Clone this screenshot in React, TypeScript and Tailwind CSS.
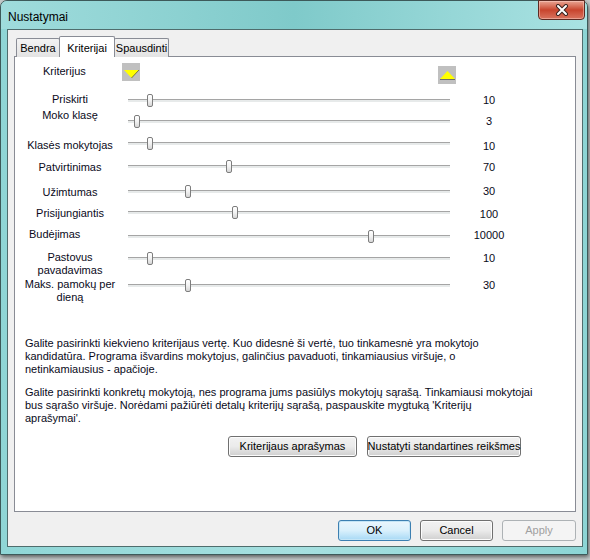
import React from 'react'

type Row = {
  label: string[]
  value: string
  thumb: number
  h: string
  labelCls: string
  valueCls: string
}

// thumb = x of the thumb centre on the page; track runs 128..450
const rows: Row[] = [
  { label: ['Priskirti'], value: '10', thumb: 150, h: 'h-[21px]', labelCls: 'mt-[1px]', valueCls: 'mt-0' },
  { label: ['Moko klasę'], value: '3', thumb: 137, h: 'h-[22px]', labelCls: '-mt-[4px]', valueCls: 'mt-0' },
  { label: ['Klasės mokytojas'], value: '10', thumb: 150, h: 'h-[23px]', labelCls: 'mt-[4px]', valueCls: 'mt-[3px]' },
  { label: ['Patvirtinimas'], value: '70', thumb: 229, h: 'h-[25px]', labelCls: 'mt-[3px]', valueCls: 'mt-[1px]' },
  { label: ['Užimtumas'], value: '30', thumb: 188, h: 'h-[21px]', labelCls: 'mt-[3px]', valueCls: 'mt-0' },
  { label: ['Prisijungiantis'], value: '100', thumb: 235, h: 'h-[24px]', labelCls: 'mt-[3px]', valueCls: 'mt-[2px]' },
  { label: ['Budėjimas'], value: '10000', thumb: 371, h: 'h-[22px]', labelCls: 'mt-0 text-left pl-[9px]', valueCls: '-mt-[1px]' },
  { label: ['Pastovus', 'pavadavimas'], value: '10', thumb: 150, h: 'h-[27px]', labelCls: 'mt-[1px]', valueCls: 'mt-0' },
  { label: ['Maks. pamokų per', 'dieną'], value: '30', thumb: 188, h: 'h-[16px]', labelCls: 'mt-[1px] leading-[12px]', valueCls: 'mt-0' },
]

function Slider({ x }: { x: number }) {
  return (
    <div className="relative w-[334px] h-[16px] shrink-0">
      <div className="absolute left-[6px] right-[6px] top-[7px] h-px bg-[#a5a5a5]" />
      <div className="absolute left-[6px] right-[6px] top-[8px] h-[2px] bg-[#e7eaea]" />
      <div
        className="absolute top-[2px] w-[6px] h-[13px] rounded-[2px] border border-[#7d7d7d] bg-gradient-to-b from-white via-[#f2f2f2] to-[#d6d6d6]"
        style={{ left: x - 122 - 3 }}
      />
    </div>
  )
}

function ArrowBox({ up }: { up?: boolean }) {
  return (
    <div className="w-[18px] h-[18px] bg-[#c0c0c0] shrink-0">
      <svg width="18" height="18" viewBox="0 0 18 18">
        {up ? (
          <>
            <polygon points="9.5,5 17,13 2,13" fill="#ffff00" />
            <line x1="2" y1="13.5" x2="17" y2="13.5" stroke="#6b6b6b" strokeWidth="1" />
          </>
        ) : (
          <>
            <polygon points="2,7 17,7 9.5,15" fill="#ffff00" />
            <line x1="17" y1="7" x2="9.5" y2="15" stroke="#7a7a3a" strokeWidth="1" />
          </>
        )}
      </svg>
    </div>
  )
}

function WinButton({ children, kind = 'normal', className = '' }: { children: React.ReactNode; kind?: 'normal' | 'default' | 'disabled'; className?: string }) {
  const look =
    kind === 'default'
      ? 'border-[#3c7fb1] bg-gradient-to-b from-[#eaf6fd] via-[#d9f0fc] to-[#a7d9f5] text-black shadow-[inset_0_0_0_1px_#c4e5f6]'
      : kind === 'disabled'
        ? 'border-[#adb2b5] bg-[#f4f4f4] text-[#a0a0a0]'
        : 'border-[#707070] bg-gradient-to-b from-[#f2f2f2] via-[#ebebeb] to-[#cfcfcf] text-black shadow-[inset_0_0_0_1px_#fcfcfc]'
  return (
    <div className={`h-[21px] rounded-[3px] border flex items-center justify-center text-[11px] whitespace-nowrap ${look} ${className}`}>
      {children}
    </div>
  )
}

export default function App() {
  return (
    <div className="w-[590px] h-[560px] bg-[#c6cccc] overflow-hidden font-['Liberation_Sans',Arial,sans-serif] text-black">
      <div className="w-[588px] h-[555px] rounded-t-[7px] border border-[#3d5a5a] bg-gradient-to-r from-[#8fd6d6] via-[#a6e0e0] to-[#8cd5d5] flex flex-col pl-[6px] pr-[4px] pb-[7px] shadow-[1px_2px_4px_rgba(0,0,0,0.55)]">
        {/* Title bar */}
        <div className="h-[28px] flex items-start shrink-0 bg-gradient-to-r from-[#9fdcdc] via-[#7fcaca] to-[#a9e2e2] -mx-[6px] -mr-[4px] px-[6px] pr-[2px] rounded-t-[6px]">
          <span className="mt-[9px] ml-[1px] text-[12px] leading-[14px]">Nustatymai</span>
          <div className="ml-auto -mt-px w-[47px] h-[20px] rounded-b-[4px] border border-[#5c2a22] bg-gradient-to-b from-[#e8a493] via-[#c8442d] to-[#d9735e] flex items-center justify-center shadow-[inset_0_0_0_1px_rgba(255,220,210,0.45)]">
            <svg width="14" height="12" viewBox="0 0 14 12">
              <path d="M3 2 L11 10 M11 2 L3 10" stroke="#3a2420" strokeWidth="4" strokeLinecap="round" />
              <path d="M3 2 L11 10 M11 2 L3 10" stroke="#ffffff" strokeWidth="2" strokeLinecap="round" />
            </svg>
          </div>
        </div>

        {/* Client area */}
        <div className="flex-1 bg-[#f0f0f0] border border-[#4f6d6d] flex flex-col px-[6px]">
          {/* Tabs */}
          <div className="h-[20px] mt-[6px] flex items-end pl-[2px] text-[11px] relative z-10">
            <div className="w-[44px] h-[19px] border border-b-0 border-[#898c95] rounded-t-[2px] bg-gradient-to-b from-[#f3f3f3] to-[#e3e3e3] flex items-center justify-center pt-px -mb-px">
              Bendra
            </div>
            <div className="w-[56px] h-[21px] -ml-px border border-b-0 border-[#898c95] rounded-t-[2px] bg-white flex items-start justify-center pt-[3px] -mb-px">
              Kriterijai
            </div>
            <div className="w-[55px] h-[19px] -ml-px border border-b-0 border-[#898c95] rounded-t-[2px] bg-gradient-to-b from-[#f3f3f3] to-[#e3e3e3] flex items-center justify-center pt-px -mb-px">
              Spausdinti
            </div>
          </div>

          {/* Tab panel */}
          <div className="h-[456px] bg-white border border-[#898c95] flex flex-col text-[11px] text-[#0a0a1a]">
            {/* Header */}
            <div className="h-[21px] mt-[6px] flex items-start">
              <span className="ml-[28px] w-[79px] mt-[1px] leading-[14px]">Kriterijus</span>
              <ArrowBox />
              <div className="ml-[298px] mt-[3px]">
                <ArrowBox up />
              </div>
            </div>

            {/* Slider rows */}
            <div className="mt-[8px] flex flex-col pl-[5px]">
              {rows.map((r) => (
                <div key={r.label.join(' ')} className={`flex items-start ${r.h}`}>
                  <div className={`w-[100px] shrink-0 text-center leading-[13px] ${r.labelCls}`}>
                    {r.label.map((l) => (
                      <div key={l}>{l}</div>
                    ))}
                  </div>
                  <div className="ml-[2px]">
                    <Slider x={r.thumb} />
                  </div>
                  <div className={`w-[66px] text-center leading-[16px] ${r.valueCls}`}>{r.value}</div>
                </div>
              ))}
            </div>

            {/* Help text */}
            <p className="mt-[44px] ml-[10px] leading-[13px] whitespace-nowrap">
              Galite pasirinkti kiekvieno kriterijaus vertę. Kuo didesnė ši vertė, tuo tinkamesnė yra mokytojo
              <br />
              kandidatūra. Programa išvardins mokytojus, galinčius pavaduoti, tinkamiausius viršuje, o
              <br />
              netinkamiausius - apačioje.
            </p>
            <p className="mt-[10px] ml-[10px] leading-[13px] whitespace-nowrap">
              Galite pasirinkti konkretų mokytoją, nes programa jums pasiūlys mokytojų sąrašą. Tinkamiausi mokytojai
              <br />
              bus sąrašo viršuje. Norėdami pažiūrėti detalų kriterijų sąrašą, paspauskite mygtuką 'Kriterijų
              <br />
              aprašymai'.
            </p>

            <div className="mt-[11px] flex justify-end gap-[10px] pr-[54px]">
              <WinButton className="w-[129px]">Kriterijaus aprašymas</WinButton>
              <WinButton className="w-[154px]">Nustatyti standartines reikšmes</WinButton>
            </div>
          </div>

          {/* Dialog buttons */}
          <div className="mt-[8px] flex justify-end gap-[9px]">
            <WinButton kind="default" className="w-[73px]">OK</WinButton>
            <WinButton className="w-[73px]">Cancel</WinButton>
            <WinButton kind="disabled" className="w-[74px]">Apply</WinButton>
          </div>
        </div>
      </div>
    </div>
  )
}
